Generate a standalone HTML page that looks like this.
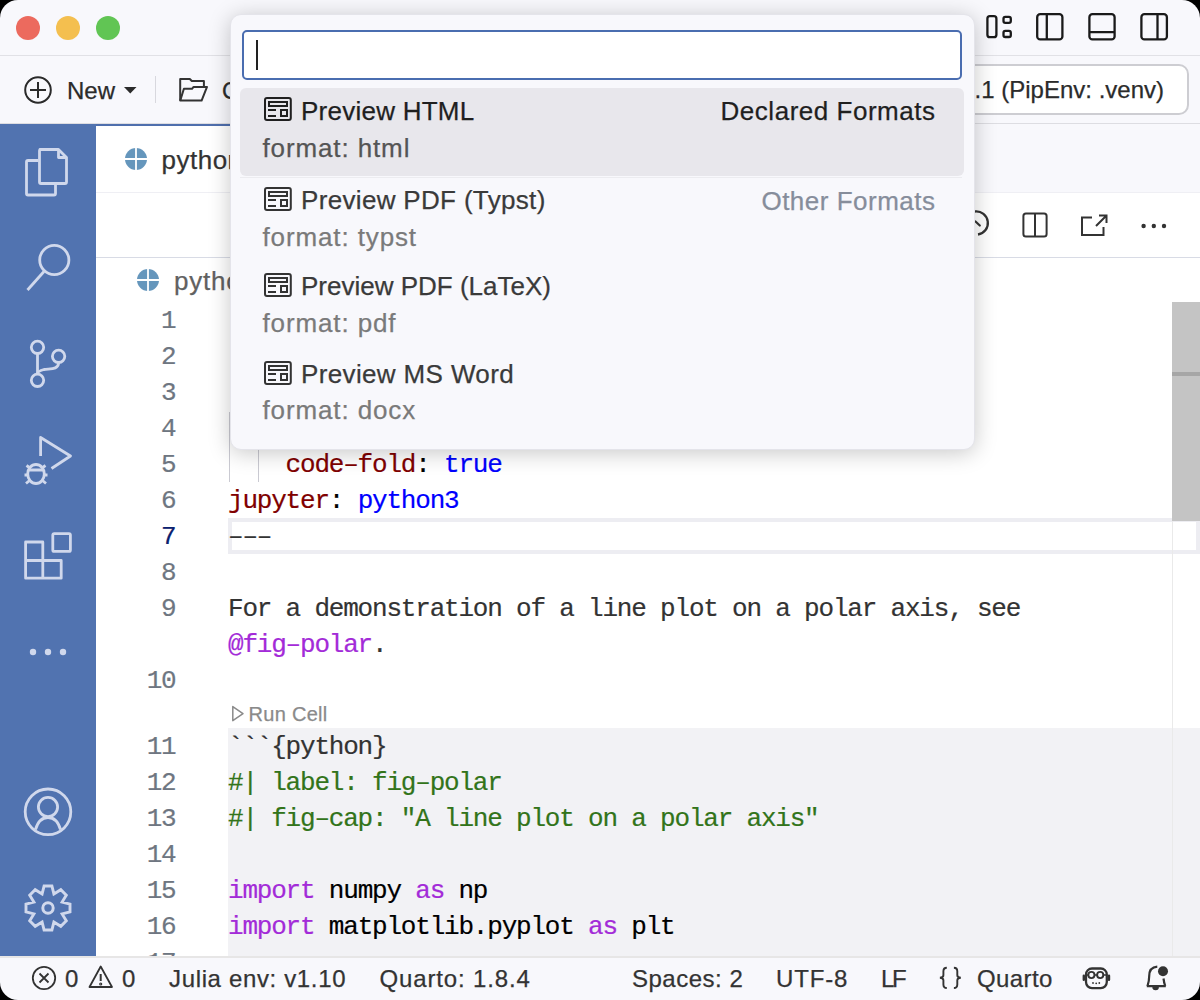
<!DOCTYPE html>
<html><head><meta charset="utf-8">
<style>
html,body{margin:0;padding:0;width:1200px;height:1000px;background:#000;overflow:hidden}
#win{position:absolute;left:0;top:0;width:1200px;height:1000px;border-radius:18px;overflow:hidden;background:#f8f8fc;font-family:"Liberation Sans",sans-serif;color:#333}
.a{position:absolute}
.t{position:absolute;white-space:pre;line-height:1;-webkit-text-stroke:0.25px currentColor}
.s24{font-size:24px}
.s26{font-size:26px}
.m{position:absolute;white-space:pre;font-family:"Liberation Mono",monospace;font-size:26px;letter-spacing:-1.2px;line-height:36px;height:36px;-webkit-text-stroke:0.2px currentColor}
.ln{position:absolute;left:96px;width:79.5px;text-align:right;font-family:"Liberation Mono",monospace;font-size:26px;letter-spacing:-1.2px;line-height:36px;color:#6e7681;-webkit-text-stroke:0.2px currentColor}
svg{position:absolute;overflow:visible}
</style></head><body><div id="win">

<!-- title bar -->
<div class="a" style="left:16px;top:16px;width:24px;height:24px;border-radius:50%;background:#ec6a5e"></div>
<div class="a" style="left:56px;top:16px;width:24px;height:24px;border-radius:50%;background:#f4bf4f"></div>
<div class="a" style="left:96px;top:16px;width:24px;height:24px;border-radius:50%;background:#61c554"></div>
<svg style="left:0;top:0" width="1200" height="54" fill="none" stroke="#1a1a1a" stroke-width="2.3">
  <rect x="987.4" y="16.2" width="9" height="21" rx="2.5"/>
  <rect x="1003.5" y="16.9" width="7.3" height="6" rx="1.8"/>
  <rect x="1003.5" y="30.9" width="7.3" height="6.1" rx="1.8"/>
  <rect x="1037.2" y="14.2" width="25.2" height="25.2" rx="3"/>
  <line x1="1046.8" y1="14.2" x2="1046.8" y2="39.4"/>
  <rect x="1089.4" y="14.2" width="25.2" height="25.2" rx="3"/>
  <line x1="1089.4" y1="32.1" x2="1114.6" y2="32.1"/>
  <rect x="1141.4" y="14.2" width="25.5" height="25.2" rx="3"/>
  <line x1="1157.5" y1="14.2" x2="1157.5" y2="39.4"/>
</svg>
<div class="a" style="left:0;top:55px;width:1200px;height:1px;background:#e1e1e6"></div>

<!-- toolbar -->
<svg style="left:0;top:0" width="300" height="124" fill="none" stroke="#2b2b2b" stroke-width="2">
  <circle cx="38" cy="90" r="12.8"/>
  <line x1="30" y1="90" x2="46" y2="90"/>
  <line x1="38" y1="82" x2="38" y2="98"/>
  <path d="M124 87 L136.5 87 L130.25 93.5 Z" fill="#2b2b2b" stroke="none"/>
  <path d="M180.2 100.6 V79 H189.8 L191.8 81 H203.9 V86.8" stroke-linejoin="round" stroke="#333"/>
  <path d="M180.2 100.6 L183.9 88.8 H192 L193.6 86.9 H207 L201.6 100.6 Z" stroke-linejoin="round" stroke="#333"/>
</svg>
<div class="t s24" style="left:67px;top:79.2px;color:#2b2b2b">New</div>
<div class="a" style="left:155px;top:76px;width:1px;height:27px;background:#d8d8de"></div>
<div class="t s24" style="left:222px;top:79.2px;color:#2b2b2b">Open File...</div>
<div class="a" style="left:780px;top:64px;width:409px;height:51px;border:2px solid #cdcdd2;border-radius:10px;background:#fff;box-sizing:border-box"></div>
<div class="t s24" style="right:36px;top:77.8px;color:#2b2b2b">Python 3.12.1 (PipEnv: .venv)</div>
<div class="a" style="left:0;top:123px;width:1200px;height:1px;background:#dddde2"></div>

<!-- activity bar -->
<div class="a" style="left:0;top:124px;width:96px;height:832px;background:#5173b0"></div>
<svg style="left:0;top:0" width="96" height="960" fill="none" stroke="#d0d8ec" stroke-width="2.8" stroke-linejoin="round">
  <!-- files -->
  <path d="M38.4 160.5 H28 a1.5 1.5 0 0 0 -1.5 1.5 V193.5 a1.5 1.5 0 0 0 1.5 1.5 H54 a1.5 1.5 0 0 0 1.5 -1.5 V183.5"/>
  <path d="M40 149.5 H58.5 L66.5 157.5 V182 a1.5 1.5 0 0 1 -1.5 1.5 H41 a1.5 1.5 0 0 1 -1.5 -1.5 V151 a1.5 1.5 0 0 1 1.5 -1.5 Z"/>
  <path d="M58.5 149.5 V157.5 H66.5"/>
  <!-- search -->
  <circle cx="54.3" cy="260" r="14.6"/>
  <line x1="44" y1="271.5" x2="27.5" y2="290"/>
  <!-- source control -->
  <circle cx="37.5" cy="347.3" r="6.2"/>
  <circle cx="58.6" cy="356.3" r="6.2"/>
  <circle cx="37.5" cy="380.3" r="6.2"/>
  <path d="M37.5 353.5 V374"/>
  <path d="M58.6 362.5 C58.6 370 50 368.5 44 369.5 C40 370.5 37.5 372 37.5 374"/>
  <!-- run & debug -->
  <path d="M40.6 456 V437.5 L70.5 456 L51.5 468.5"/>
  <ellipse cx="36" cy="474" rx="8.3" ry="9.5"/>
  <path d="M28 470 H44 M24.5 475 H28 M44 475 H47.5 M26.5 465.5 L30 468 M45.5 465.5 L42 468 M26 483.5 L29.5 480.5 M46 483.5 L42.5 480.5"/>
  <!-- extensions -->
  <path d="M25.6 542 H42.8 V560.5 H61.2 V578.2 H25.6 Z"/>
  <path d="M42.8 560.5 V578.2 M25.6 560.5 H42.8"/>
  <rect x="52.8" y="533.6" width="17.6" height="17.8" rx="1.5"/>
  <!-- account -->
  <circle cx="48" cy="811.8" r="22.8"/>
  <circle cx="48" cy="807" r="9.6"/>
  <path d="M35.5 829.5 C38 821 43 817.5 48 817.5 C53 817.5 58 821 60.5 829.5"/>
  <!-- gear -->
  <circle cx="48" cy="908" r="5.2" stroke-width="3"/>
  <path d="M42.1 893.9 L44.1 886.0 L51.9 886.0 L53.9 893.9 L60.8 889.7 L66.3 895.2 L62.1 902.1 L70.0 904.1 L70.0 911.9 L62.1 913.9 L66.3 920.8 L60.8 926.3 L53.9 922.1 L51.9 930.0 L44.1 930.0 L42.1 922.1 L35.2 926.3 L29.7 920.8 L33.9 913.9 L26.0 911.9 L26.0 904.1 L33.9 902.1 L29.7 895.2 L35.2 889.7 Z" stroke-width="2.9" stroke-linejoin="miter"/>
</svg>
<svg style="left:0;top:0" width="96" height="700" fill="#d0d8ec">
  <circle cx="33" cy="652" r="3.2"/><circle cx="48" cy="652" r="3.2"/><circle cx="63" cy="652" r="3.2"/>
</svg>

<!-- editor -->
<div class="a" style="left:96px;top:124px;width:1104px;height:832px;background:#fff"></div>
<div class="a" style="left:96px;top:124px;width:1104px;height:68px;background:#f8f8fc"></div>
<div class="a" style="left:96px;top:124px;width:420px;height:68px;background:#fff;border-top:2px solid #4f6fad;box-sizing:border-box"></div>
<div class="a" style="left:96px;top:192px;width:1104px;height:1px;background:#efeff4"></div>
<svg style="left:0;top:0" width="200" height="300">
  <circle cx="136" cy="159" r="11" fill="#6596bc"/>
  <path d="M125 159 H147 M136 148 V170" stroke="#fff" stroke-width="1.8"/>
  <circle cx="148" cy="280" r="11" fill="#6596bc"/>
  <path d="M137 280 H159 M148 269 V291" stroke="#fff" stroke-width="1.8"/>
</svg>
<div class="t s26" style="left:161.5px;top:146.7px;color:#333;letter-spacing:0.5px">python-polar.qmd</div>
<div class="a" style="left:96px;top:257px;width:1104px;height:1px;background:#d8dbe5"></div>
<div class="t s26" style="left:174px;top:267.6px;color:#616161;letter-spacing:0.8px">python-polar.qmd</div>

<!-- editor actions -->
<svg style="left:0;top:0" width="1200" height="260" fill="none" stroke="#333" stroke-width="2">
  <path d="M975 211.5 A11.6 11.6 0 0 1 978 234.5" stroke-width="2.3"/>
  <path d="M975.5 221.5 L979.8 225.5" stroke-width="2.2" stroke-linecap="round"/>
  <rect x="1023.4" y="213.4" width="23.2" height="23.2" rx="2.5"/>
  <line x1="1035" y1="213.4" x2="1035" y2="236.6"/>
  <path d="M1092 217.5 H1082 V235 H1103.5 V227"/>
  <path d="M1096 226 L1106.5 215.5 M1099 215.5 H1106.5 V223"/>
</svg>
<svg style="left:0;top:0" width="1200" height="260" fill="#333">
  <circle cx="1143.6" cy="226" r="2.2"/><circle cx="1153.8" cy="226" r="2.2"/><circle cx="1164" cy="226" r="2.2"/>
</svg>

<!-- line numbers -->
<div class="ln" style="top:303px">1</div>
<div class="ln" style="top:339px">2</div>
<div class="ln" style="top:375px">3</div>
<div class="ln" style="top:411px">4</div>
<div class="ln" style="top:447px">5</div>
<div class="ln" style="top:483px">6</div>
<div class="ln" style="top:519px;color:#0b216f">7</div>
<div class="ln" style="top:555px">8</div>
<div class="ln" style="top:591px">9</div>
<div class="ln" style="top:663px">10</div>
<div class="ln" style="top:729px">11</div>
<div class="ln" style="top:765px">12</div>
<div class="ln" style="top:801px">13</div>
<div class="ln" style="top:837px">14</div>
<div class="ln" style="top:873px">15</div>
<div class="ln" style="top:909px">16</div>
<div class="ln" style="top:945px;height:13px;overflow:hidden">17</div>

<!-- code -->
<div class="a" style="left:228px;top:728px;width:972px;height:228px;background:#f2f2f5"></div>
<div class="a" style="left:228px;top:518px;width:972px;height:36px;border:4px solid #ededf2;box-sizing:border-box"></div>
<div class="a" style="left:228.5px;top:412px;width:1.5px;height:70px;background:#cacad2"></div>
<div class="a" style="left:257.5px;top:412px;width:1.5px;height:70px;background:#cacad2"></div>
<div class="m" style="left:228px;top:447px"><span style="color:#800000">    code&#8211;fold</span><span style="color:#000">: </span><span style="color:#0000ff">true</span></div>
<div class="m" style="left:228px;top:483px"><span style="color:#800000">jupyter</span><span style="color:#000">: </span><span style="color:#0000ff">python3</span></div>
<div class="m" style="left:228px;top:519px;color:#333">&#8211;&#8211;&#8211;</div>
<div class="m" style="left:228px;top:591px;color:#333">For a demonstration of a line plot on a polar axis, see</div>
<div class="m" style="left:228px;top:627px"><span style="color:#a32bd8">@fig&#8211;polar</span><span style="color:#333">.</span></div>
<svg style="left:0;top:0" width="260" height="730" fill="none" stroke="#8a8a8a" stroke-width="1.5">
  <path d="M232.8 706.6 L243 713.6 L232.8 720.6 Z" stroke-linejoin="round"/>
</svg>
<div class="t" style="left:248.5px;top:704px;font-size:20px;color:#8a8a8a;letter-spacing:0.3px">Run Cell</div>
<div class="m" style="left:228px;top:729px;color:#333">```{python}</div>
<div class="m" style="left:228px;top:765px;color:#32741a">#| label: fig&#8211;polar</div>
<div class="m" style="left:228px;top:801px;color:#32741a">#| fig&#8211;cap: "A line plot on a polar axis"</div>
<div class="m" style="left:228px;top:873px"><span style="color:#a32bd8">import</span><span style="color:#000"> numpy </span><span style="color:#a32bd8">as</span><span style="color:#000"> np</span></div>
<div class="m" style="left:228px;top:909px"><span style="color:#a32bd8">import</span><span style="color:#000"> matplotlib.pyplot </span><span style="color:#a32bd8">as</span><span style="color:#000"> plt</span></div>

<!-- scrollbar -->
<div class="a" style="left:1172px;top:302px;width:1px;height:654px;background:#eaeaea"></div>
<div class="a" style="left:1172px;top:302px;width:28px;height:219px;background:#c4c4c4"></div>
<div class="a" style="left:1172px;top:372px;width:28px;height:4px;background:#a6a6a6"></div>

<!-- status bar -->
<div class="a" style="left:0;top:956px;width:1200px;height:2px;background:#e7e6e6"></div>
<svg style="left:0;top:950px" width="1200" height="50" fill="none" stroke="#333" stroke-width="2">
  <circle cx="44" cy="28" r="11.2" stroke-width="1.8"/>
  <path d="M39.5 23.5 L48.5 32.5 M48.5 23.5 L39.5 32.5" stroke-width="1.8"/>
  <path d="M100.7 16.5 L112 37 H89.5 Z" stroke-linejoin="round" stroke-width="1.8"/>
  <path d="M100.7 24 V31" /><circle cx="100.7" cy="34" r="0.6"/>
</svg>
<div class="t s24" style="left:65px;top:967.2px">0</div>
<div class="t s24" style="left:122px;top:967.2px">0</div>
<div class="t s24" style="left:169px;top:967.2px;letter-spacing:0.65px">Julia env: v1.10</div>
<div class="t s24" style="left:379.5px;top:967.2px;letter-spacing:0.85px">Quarto: 1.8.4</div>
<div class="t s24" style="left:632px;top:967.2px;letter-spacing:0.5px">Spaces: 2</div>
<div class="t s24" style="left:776px;top:967.2px;letter-spacing:0.85px">UTF-8</div>
<div class="t s24" style="left:881px;top:967.2px;letter-spacing:-2.4px">LF</div>
<svg style="left:0;top:950px" width="1200" height="50" fill="none" stroke="#333" stroke-width="1.9">
  <path d="M946.8 17.8 C944.2 17.8 943.4 18.8 943.4 21.3 V25.3 C943.4 26.9 942.4 27.7 939.9 27.8 C942.4 27.9 943.4 28.7 943.4 30.3 V34.5 C943.4 37 944.2 38 946.8 38"/>
  <path d="M953.9 17.8 C956.5 17.8 957.3 18.8 957.3 21.3 V25.3 C957.3 26.9 958.3 27.7 960.8 27.8 C958.3 27.9 957.3 28.7 957.3 30.3 V34.5 C957.3 37 956.5 38 953.9 38"/>
</svg>
<div class="t s24" style="left:977px;top:967.2px;letter-spacing:0.4px">Quarto</div>
<svg style="left:0;top:950px" width="1200" height="50" fill="none" stroke="#333" stroke-width="2">
  <rect x="1086" y="18.5" width="20.8" height="19.6" rx="6" stroke-width="2.3"/>
  <path d="M1083.8 25.8 v4 M1109 25.8 v4" stroke-width="2.4" stroke-linecap="round"/>
  <circle cx="1091.4" cy="25" r="3.1" stroke-width="1.9"/><circle cx="1100.2" cy="25" r="3.1" stroke-width="1.9"/>
  <path d="M1086 25 H1088.3 M1094.5 25 H1097.1 M1103.3 25 H1106.8" stroke-width="1.6"/>
  <circle cx="1093" cy="33" r="0.9" fill="#333" stroke="none"/><circle cx="1096.2" cy="33.3" r="0.9" fill="#333" stroke="none"/><circle cx="1099.3" cy="33" r="0.9" fill="#333" stroke="none"/>
  <path d="M1147.5 36 C1148.5 33 1149.2 29 1149.2 26 C1149.2 20 1152.5 17 1157.3 16.6" stroke-width="2.2"/>
  <path d="M1163.5 28.5 C1163.8 31 1164.3 33.5 1165.2 36 M1146.8 36.2 H1165.8" stroke-width="2.2"/>
  <path d="M1152.3 37 a3.3 3.3 0 0 0 6.6 0 Z" fill="#333" stroke="none"/>
  <circle cx="1163" cy="21.2" r="5" fill="#333" stroke="none"/>
</svg>

<!-- quick pick -->
<div class="a" style="left:229.5px;top:13.8px;width:745px;height:436.5px;border-radius:11px;background:#f8f8fc;border:1px solid #e4e4ea;box-sizing:border-box;box-shadow:0 3px 22px rgba(0,0,0,0.22)"></div>
<div class="a" style="left:242px;top:30px;width:720px;height:50px;border:2px solid #4a6db0;border-radius:5px;background:#fff;box-sizing:border-box"></div>
<div class="a" style="left:256px;top:40px;width:2px;height:30px;background:#222"></div>
<div class="a" style="left:240px;top:88px;width:724px;height:88px;border-radius:6px;background:#e8e7ec"></div>
<div class="a" style="left:240px;top:177px;width:722px;height:1px;background:#ececf0"></div>
<svg style="left:0;top:0" width="1000" height="460" fill="none" stroke="#1f1f1f" stroke-width="2">
  <g id="ic">
    <rect x="265" y="98" width="25.8" height="22" rx="2"/>
    <rect x="269" y="102" width="18" height="4"/>
    <path d="M268 110 H276 M268 116 H276"/>
    <rect x="281" y="110" width="6" height="6"/>
  </g>
</svg>
<svg style="left:0;top:0" width="1000" height="460" fill="none" stroke="#333" stroke-width="2">
  <use href="#ic" y="90"/>
  <use href="#ic" y="176"/>
  <use href="#ic" y="264"/>
</svg>
<div class="t s26" style="left:301px;top:97.6px;color:#1f1f1f;letter-spacing:0.25px">Preview HTML</div>
<div class="t s26" style="right:264.5px;top:97.8px;color:#1f1f1f;letter-spacing:0.52px">Declared Formats</div>
<div class="t s26" style="left:262.5px;top:134.6px;color:#555;letter-spacing:0.88px">format: html</div>
<div class="t s26" style="left:301px;top:187.4px;color:#3a3a3a;letter-spacing:0.33px">Preview PDF (Typst)</div>
<div class="t s26" style="right:264.5px;top:187.6px;color:#868d9b;letter-spacing:0.5px">Other Formats</div>
<div class="t s26" style="left:262.5px;top:224.3px;color:#7a7a7a;letter-spacing:0.88px">format: typst</div>
<div class="t s26" style="left:301px;top:273.2px;color:#3a3a3a;letter-spacing:0px">Preview PDF (LaTeX)</div>
<div class="t s26" style="left:262.5px;top:310.1px;color:#7a7a7a;letter-spacing:0.88px">format: pdf</div>
<div class="t s26" style="left:301px;top:360.8px;color:#3a3a3a;letter-spacing:0.36px">Preview MS Word</div>
<div class="t s26" style="left:262.5px;top:397.2px;color:#7a7a7a;letter-spacing:0.88px">format: docx</div>

</div></body></html>
